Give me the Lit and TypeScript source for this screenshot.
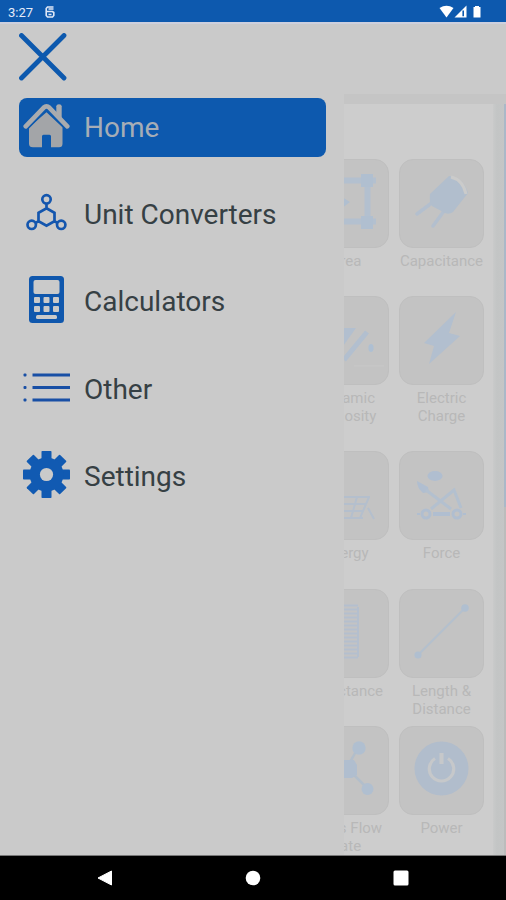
import { LitElement, html, svg, css } from "lit";
import { customElement } from "lit/decorators.js";

const menuIcons: Record<string, unknown> = {
  home: svg`<g transform="translate(0 -.7)"><path d="M23.500 11 39.500 26V42.500Q39.500 46 36 46H28V35Q28 33.500 26.500 33.500H20.500Q19 33.500 19 35V46H10Q6 46 6 42.500V26Z" fill="#a3a5a8"/><path d="M2.700 25 20.500 7Q23.500 4 26.500 7L44.300 25" fill="none" stroke="#0d59ae" stroke-width="8"/><path d="M2.700 25 20.500 6.500Q23.500 3.700 26.500 6.500L44.300 25" fill="none" stroke="#a9abae" stroke-width="4.600" stroke-linecap="round"/><path d="M33.300 11V5Q33.300 3 36 3T38.700 5V17L33.300 12Z" fill="#a9abae"/></g>`,
  molecule: svg`<g fill="none" stroke="#1456ae" stroke-width="2.700" transform="translate(0 3.800)"><circle cx="23.500" cy="6.500" r="4.200"/><circle cx="8.700" cy="32" r="4.200"/><circle cx="38.200" cy="32" r="4.200"/><path d="M23.500 15.500 31.500 20V28.500L23.500 33 15.500 28.500V20ZM23.500 11V15.500M15.500 28.500 12.300 30.300M31.500 28.500 34.700 30.300"/></g>`,
  calculator: svg`<rect x="6" y="0" width="35" height="47" rx="3.500" fill="#0f57ad"/><g fill="#cacaca"><rect x="10.500" y="4" width="26" height="14" rx="2"/><rect x="11" y="21" width="6" height="6" rx="1"/><rect x="20.500" y="21" width="6" height="6" rx="1"/><rect x="30" y="21" width="6" height="6" rx="1"/><rect x="11" y="30" width="6" height="6" rx="1"/><rect x="20.500" y="30" width="6" height="6" rx="1"/><rect x="30" y="30" width="6" height="6" rx="1"/><rect x="13" y="39" width="21" height="4" rx="1.500"/></g>`,
  list: svg`<g fill="#184fa5"><rect x="0.500" y="9.500" width="3" height="3" rx="1"/><rect x="0.500" y="22" width="3" height="3" rx="1"/><rect x="0.500" y="34.500" width="3" height="3" rx="1"/><rect x="9.500" y="9.500" width="37.500" height="3"/><rect x="9.500" y="22" width="37.500" height="3"/><rect x="9.500" y="34.500" width="37.500" height="3"/></g>`,
  gear: svg`<g fill="#115ab2">${[0, 45, 90, 135].map(
    (a) => svg`<rect x="18.500" y="0" width="10" height="47" rx=".8" transform="rotate(${a} 23.500 23.500)"/>`
  )}<circle cx="23.500" cy="23.500" r="17"/></g><circle cx="23.500" cy="23.500" r="6.600" fill="#cacaca"/>`,
};

/* Tile drawings share an 85 x 89 canvas. */
const tileIcons: Record<string, unknown> = {
  area: svg`<path d="M22 21.500H72M22 62.500H72M63.500 21V62" fill="none" stroke="#b3c0cf" stroke-width="6"/><path d="M57 15h12v13H57zM57 57h12v13H57z" fill="#b0bfd0"/><path d="M38 38l8 5-8 6z" fill="#b0bfd0"/>`,
  capacitor: svg`<path d="M34 43 18 55M45 52 34 67" stroke="#b3bfce" stroke-width="3.500" stroke-linecap="round"/><path d="M50 17Q64 18 69 34L54 53Q50 56 46 54L33 47Q30 44 31 35Z" fill="#b1becd"/><path d="M52 18Q64 21 67 35" fill="none" stroke="#cbcbca" stroke-width="3"/>`,
  viscosity: svg`<path d="M37 32H52L37 53Z" fill="#b2bfcf"/><path d="M40 64 63 36" stroke="#b2bfcf" stroke-width="5"/><ellipse cx="67" cy="52" rx="2.600" ry="4" fill="#aebfd2"/><path d="M50 70H80" stroke="#c8c8c8"/>`,
  bolt: svg`<path d="M57 16 25 47 35 50 30 68 61 40 50 37Z" fill="#b2bfcf"/>`,
  panel: svg`<g fill="none" stroke="#b4bfcd" stroke-width="2"><path d="M38 46H66M37 53H62M36 60H60M35 67H59M65 46 56 67M53 46 47 67M64 57 70 68"/></g>`,
  force: svg`<ellipse cx="36" cy="25" rx="7.500" ry="5" fill="#b0bed0"/><path d="M18 30 29 36 30 41 24 42Q18 37 18 30Z" fill="#b0bed0"/><path d="M27 39 52 58M32 58 55 39 62 57" fill="none" stroke="#b3c0cf" stroke-width="3"/><g fill="none" stroke="#b0bed0" stroke-width="3"><circle cx="27" cy="63" r="4"/><circle cx="58" cy="63" r="4"/><path d="M34 63H51" stroke-width="4"/><path d="M18 63H21M64 63H67" stroke-width="2"/></g>`,
  coil: svg`<g fill="none" stroke="#b4bfce" stroke-width="2">${Array.from(
    { length: 14 },
    (_, i) => svg`<path d="M33 ${16.5 + i * 4}H54"/>`
  )}<path d="M54 18V68"/></g>`,
  length: svg`<path d="M19 66 66 19" stroke="#b3c0ce" stroke-width="1.800"/><circle cx="19" cy="66" r="3.600" fill="#b0bfd0"/><circle cx="66" cy="19" r="3.800" fill="#b0bfd0"/>`,
  flow: svg`<path d="M42 43 54 22M43 42 64 63" stroke="#b2becb" stroke-width="2.500"/><path d="M35 34H50L53 39V49L48 52H35Z" fill="#b0becf"/><circle cx="55" cy="22" r="6.700" fill="#b0bfd0"/><circle cx="63.500" cy="63" r="6" fill="#b0bfd0"/>`,
  power: svg`<circle cx="42.500" cy="42.500" r="27" fill="#b1bdcc"/><path d="M36 32.500A12.200 12.200 0 1 0 49 32.500" fill="none" stroke="#c6c8ca" stroke-width="3.200"/><path d="M42.500 27V38" stroke="#c6c8ca" stroke-width="4"/>`,
};

const menu = [
  { icon: "home", label: "Home", active: true },
  { icon: "molecule", label: "Unit Converters" },
  { icon: "calculator", label: "Calculators" },
  { icon: "list", label: "Other" },
  { icon: "gear", label: "Settings" },
];

const tiles = [
  { icon: "area", lines: ["Area"] },
  { icon: "capacitor", lines: ["Capacitance"] },
  { icon: "viscosity", lines: ["Dynamic", "Viscosity"] },
  { icon: "bolt", lines: ["Electric", "Charge"] },
  { icon: "panel", lines: ["Energy"] },
  { icon: "force", lines: ["Force"] },
  { icon: "coil", lines: ["Inductance"] },
  { icon: "length", lines: ["Length &", "Distance"] },
  { icon: "flow", lines: ["Mass Flow", "Rate"] },
  { icon: "power", lines: ["Power"] },
];

@customElement("app-root")
export class AppRoot extends LitElement {
  static styles = css`
    :host {
      display: flex;
      flex-direction: column;
      width: 506px;
      height: 900px;
      overflow: hidden;
      background: #cacaca;
      font-family: Roboto, "Liberation Sans", sans-serif;
    }
    * { box-sizing: border-box; }
    svg { display: block; flex: none; }
    .status {
      height: 24px;
      flex: none;
      background: #0d59ae;
      border-bottom: 2px solid #cdd0de;
      display: flex;
      align-items: center;
      padding: 2px 24px 0 8px;
      color: #e4ebf8;
      font-size: 13px;
    }
    .time { width: 37px; }
    .signals { margin-left: auto; }
    .main { flex: 1; display: flex; min-height: 0; }
    .drawer { width: 344px; flex: none; padding: 9px 18px 0 19px; }
    .close { margin-bottom: 17px; }
    .item {
      height: 59px;
      margin-bottom: 28.200px;
      padding-left: 4px;
      display: flex;
      align-items: center;
      gap: 14px;
      border-radius: 8px;
      font-size: 28px;
      color: #364044;
    }
    .item.active { background: #0d59ae; color: #a6adb6; }
    .item svg { margin-bottom: 4px; }
    .page {
      flex: 1;
      margin-top: 70px;
      background: #cdcdcd;
      border-top: 10px solid #c5c5c5;
      display: flex;
      overflow: hidden;
    }
    .tiles {
      width: 149px;
      flex: none;
      padding: 55px 9px 0 0;
      display: grid;
      grid-template-columns: 85px 85px;
      grid-template-rows: 137px 155px 138px 137px 137px;
      column-gap: 10.500px;
      justify-content: end;
    }
    .frame {
      width: 85px;
      height: 89px;
      border-radius: 14px;
      background: #c3c3c3;
      border: 1px solid #bfbfbf;
    }
    .frame svg { margin: -1px; }
    .label {
      margin: 5px -10px 0;
      text-align: center;
      font-size: 15px;
      line-height: 17.500px;
      white-space: nowrap;
      color: #b8b8b8;
    }
    .edge { flex: 1; margin-top: -10px; background: linear-gradient(90deg, #c9caca, #c3c5c5 30%, #c5c6c6); display: flex; justify-content: flex-end; }
    .scroll { width: 2px; background: linear-gradient(#aab8c8 0 413px, #bcbcbc 413px); }
    .nav {
      height: 45px;
      flex: none;
      background: #000;
      border-top: 1px solid #777;
      display: flex;
      justify-content: space-between;
      align-items: center;
      padding: 0 97px 0 97px;
    }
  `;

  render() {
    return html`
      <header class="status">
        <span class="time">3:27</span>
        <svg width="10" height="12" viewBox="0 0 10 12" fill="none" stroke="#dfe7f6" stroke-width="1.600">
          <path d="M8.500 1H2.500L1.200 2.500V9.500L2.500 11H7.500L8.800 9.500V6.500L7.500 5.500H2M3.500 3H8.500M3.500 8.500H6.500" />
        </svg>
        <svg class="signals" width="43" height="14" viewBox="0 0 43 14" fill="#fff">
          <path d="M0.500 3Q7.500-1.500 14.500 3L7.500 12.500Z" />
          <path d="M15.500 12.500 27.500 0.500V12.500Z" />
          <path d="M24.200 5.500V11.200" stroke="#0d59ae" stroke-width="1.600" />
          <path d="M36 1H40V2H41.500V12.500H34.500V2H36Z" />
        </svg>
      </header>
      <div class="main">
        <nav class="drawer">
          <svg class="close" width="48" height="48" viewBox="0 0 48 48">
            <path d="M2.500 2.500 45 45M45 2.500 2.500 45" stroke="#0d59ae" stroke-width="4.800" stroke-linecap="round" />
          </svg>
          ${menu.map(
            (m) => html`<div class="item ${m.active ? "active" : ""}">
              <svg width="47" height="47" viewBox="0 0 47 47">${menuIcons[m.icon]}</svg>
              <span>${m.label}</span>
            </div>`
          )}
        </nav>
        <section class="page">
          <div class="tiles">
            ${tiles.map(
              (t) => html`<div>
                <div class="frame"><svg width="85" height="89" viewBox="0 0 85 89">${tileIcons[t.icon]}</svg></div>
                <div class="label">${t.lines.map((l) => html`<div>${l}</div>`)}</div>
              </div>`
            )}
          </div>
          <div class="edge"><div class="scroll"></div></div>
        </section>
      </div>
      <footer class="nav">
        <svg width="16" height="16" viewBox="0 0 16 16"><path d="M1 8 14.500 1V15Z" fill="#fff" stroke="#fff" /></svg>
        <svg width="16" height="16" viewBox="0 0 16 16"><circle cx="8" cy="8" r="7.300" fill="#fff" /></svg>
        <svg width="16" height="16" viewBox="0 0 16 16"><rect x=".5" y=".5" width="15" height="15" rx="1.500" fill="#fff" /></svg>
      </footer>
    `;
  }
}
